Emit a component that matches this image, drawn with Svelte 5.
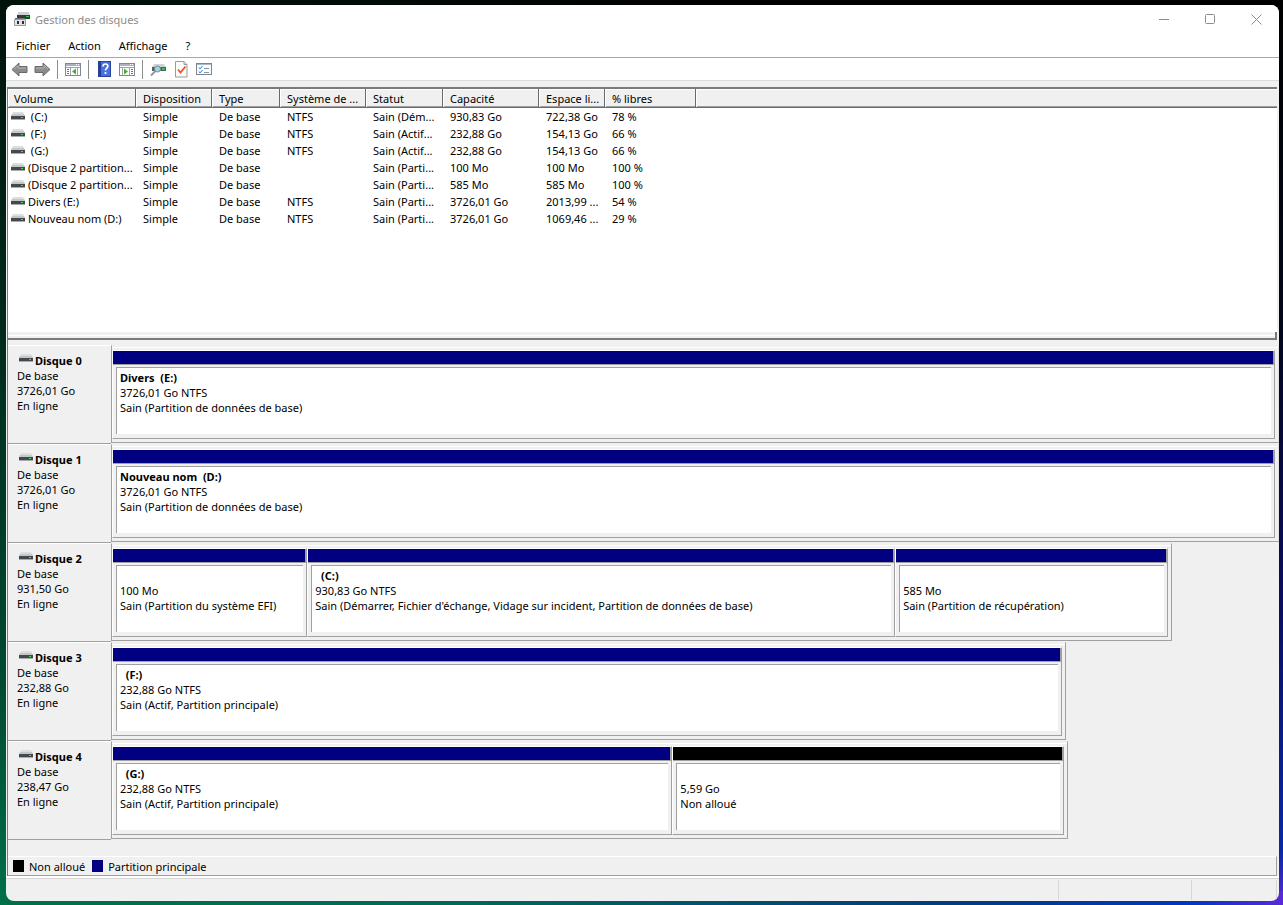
<script>
  const columns = [
    { key: 'volume', label: 'Volume', width: 128 },
    { key: 'layout', label: 'Disposition', width: 76 },
    { key: 'type', label: 'Type', width: 68 },
    { key: 'fs', label: 'Système de ...', width: 86 },
    { key: 'status', label: 'Statut', width: 77 },
    { key: 'capacity', label: 'Capacité', width: 96 },
    { key: 'free', label: 'Espace li...', width: 66 },
    { key: 'percent', label: '% libres', width: 91 }
  ];

  const volumes = [
    { volume: ' (C:)', fs: 'NTFS', status: 'Sain (Dém...', capacity: '930,83 Go', free: '722,38 Go', percent: '78 %' },
    { volume: ' (F:)', fs: 'NTFS', status: 'Sain (Actif...', capacity: '232,88 Go', free: '154,13 Go', percent: '66 %' },
    { volume: ' (G:)', fs: 'NTFS', status: 'Sain (Actif...', capacity: '232,88 Go', free: '154,13 Go', percent: '66 %' },
    { volume: '(Disque 2 partition...', fs: '', status: 'Sain (Parti...', capacity: '100 Mo', free: '100 Mo', percent: '100 %' },
    { volume: '(Disque 2 partition...', fs: '', status: 'Sain (Parti...', capacity: '585 Mo', free: '585 Mo', percent: '100 %' },
    { volume: 'Divers (E:)', fs: 'NTFS', status: 'Sain (Parti...', capacity: '3726,01 Go', free: '2013,99 ...', percent: '54 %' },
    { volume: 'Nouveau nom (D:)', fs: 'NTFS', status: 'Sain (Parti...', capacity: '3726,01 Go', free: '1069,46 ...', percent: '29 %' }
  ].map((v) => ({ layout: 'Simple', type: 'De base', ...v }));

  // scale = share of the available width, share = relative size of a partition
  const disks = [
    {
      name: 'Disque 0', size: '3726,01 Go', scale: 100,
      parts: [{ name: 'Divers  (E:)', size: '3726,01 Go NTFS', status: 'Sain (Partition de données de base)', share: 1 }]
    },
    {
      name: 'Disque 1', size: '3726,01 Go', scale: 100,
      parts: [{ name: 'Nouveau nom  (D:)', size: '3726,01 Go NTFS', status: 'Sain (Partition de données de base)', share: 1 }]
    },
    {
      name: 'Disque 2', size: '931,50 Go', scale: 90.8,
      parts: [
        { name: '', size: '100 Mo', status: 'Sain (Partition du système EFI)', share: 193 },
        { name: '  (C:)', size: '930,83 Go NTFS', status: "Sain (Démarrer, Fichier d'échange, Vidage sur incident, Partition de données de base)", share: 585 },
        { name: '', size: '585 Mo', status: 'Sain (Partition de récupération)', share: 270 }
      ]
    },
    {
      name: 'Disque 3', size: '232,88 Go', scale: 81.8,
      parts: [{ name: '  (F:)', size: '232,88 Go NTFS', status: 'Sain (Actif, Partition principale)', share: 1 }]
    },
    {
      name: 'Disque 4', size: '238,47 Go', scale: 81.9,
      parts: [
        { name: '  (G:)', size: '232,88 Go NTFS', status: 'Sain (Actif, Partition principale)', share: 558 },
        { name: '', size: '5,59 Go', status: 'Non alloué', share: 389, free: true }
      ]
    }
  ];

  const menus = ['Fichier', 'Action', 'Affichage', '?'];
</script>

{#snippet driveIcon()}
  <svg class="drive" width="14" height="9" viewBox="0 0 14 9" aria-hidden="true">
    <path d="M2 0h10l2 4H0z" fill="#dcdee0" />
    <path d="M1 2h12l1 2H0z" fill="#c4c7ca" />
    <path d="M0 4h14v3H0z" fill="#45494c" />
    <path d="M0 7h14v1H0z" fill="#a9acae" />
    <path d="M10 5h2v1h-2z" fill="#35e03a" />
  </svg>
{/snippet}

<div class="desktop">
  <div class="window">
    <header class="titlebar">
      <svg width="16" height="16" viewBox="0 0 16 16" aria-hidden="true">
        <path d="M4 1h11l1 4H3z" fill="#cfd1d3" />
        <path d="M3 4h13v4H3z" fill="#35393b" />
        <path d="M12 5h3v1h-3z" fill="#2fcf3a" />
        <path d="M1 7h10v2H1z" fill="#6e7275" />
        <path d="M.5 8.500h11v6H.5z" fill="#e2e3e4" stroke="#999" />
        <path d="M3 10h2v3H3zM8 10h2v3H8z" fill="#2c2c2c" />
      </svg>
      <h1>Gestion des disques</h1>
      <div class="controls">
        <button aria-label="Réduire">
          <svg width="11" height="11" viewBox="0 0 11 11"><path d="M0 5.5h10" /></svg>
        </button>
        <button aria-label="Agrandir">
          <svg width="11" height="11" viewBox="0 0 11 11"><rect x=".5" y=".5" width="9" height="9" rx="1" /></svg>
        </button>
        <button aria-label="Fermer">
          <svg width="11" height="11" viewBox="0 0 11 11"><path d="M.5 .5l10 10M10.5 .5l-10 10" /></svg>
        </button>
      </div>
    </header>

    <nav class="menubar">
      {#each menus as menu}
        <button>{menu}</button>
      {/each}
    </nav>

    <div class="toolbar">
      <button aria-label="Précédent">
        <svg width="17" height="15" viewBox="0 0 17 15">
          <path d="M1 7.5L8 1v3.5h8v6H8V14z" fill="#8c8c8c" stroke="#6a6a6a" />
          <path d="M3 7L7 3.5V6h8" fill="none" stroke="#b5b5b5" />
        </svg>
      </button>
      <button aria-label="Suivant">
        <svg width="17" height="15" viewBox="0 0 17 15">
          <path d="M16 7.5L9 1v3.5H1v6h8V14z" fill="#8c8c8c" stroke="#6a6a6a" />
          <path d="M14 7l-4-3.500V6H2" fill="none" stroke="#b5b5b5" />
        </svg>
      </button>
      <span class="sep"></span>
      <button aria-label="Afficher l'arborescence">
        <svg width="17" height="15" viewBox="0 0 17 15">
          <rect x=".5" y="1.500" width="15" height="12" fill="#fff" stroke="#7f8a96" />
          <path d="M1 2h14v2H1z" fill="#a9b4c0" />
          <path d="M11 2h1v1h-1zM13 2h1v1h-1z" fill="#fff" />
          <path d="M1 5.500h14M5.500 5v8M12.500 6v7" stroke="#9aa5b0" fill="none" />
          <path d="M2 7.500h2M2 9.500h2M2 11.500h2" stroke="#4878b0" />
          <path d="M11 6.500v6l-4-3z" fill="#3fae2a" />
        </svg>
      </button>
      <span class="sep"></span>
      <button aria-label="Aide">
        <svg width="15" height="17" viewBox="0 0 15 17">
          <rect x="1.500" y=".5" width="12" height="15" fill="#4a70dc" stroke="#2b429c" />
          <path d="M2 1h2v14H2z" fill="#233d9c" />
          <path d="M6 5.500C6 3.600 7 3 8.300 3c1.500 0 2.500.8 2.500 2.200 0 2-2.300 2.100-2.300 4.300M8.500 11v2" fill="none" stroke="#fff" stroke-width="1.700" />
        </svg>
      </button>
      <button aria-label="Afficher le volet Actions">
        <svg width="17" height="15" viewBox="0 0 17 15">
          <rect x=".5" y="1.500" width="15" height="12" fill="#fff" stroke="#7f8a96" />
          <path d="M1 2h14v2H1z" fill="#a9b4c0" />
          <path d="M11 2h1v1h-1zM13 2h1v1h-1z" fill="#fff" />
          <path d="M1 5.500h14M10.500 5v8M3.500 6v7" stroke="#9aa5b0" fill="none" />
          <path d="M12 7.500h2M12 9.500h2M12 11.500h2" stroke="#4878b0" />
          <path d="M5 6.500v6l4-3z" fill="#3fae2a" />
        </svg>
      </button>
      <span class="sep"></span>
      <button aria-label="Actualiser">
        <svg width="17" height="15" viewBox="0 0 17 15">
          <path d="M4 2h10l2 3H2z" fill="#d0d4d6" />
          <path d="M2 5h14v4H2z" fill="#565d60" />
          <path d="M12 6h3v2h-3z" fill="#25c93d" />
          <path d="M5.500 9L1 13.500" stroke="#8b9aa2" stroke-width="2" />
          <circle cx="7.500" cy="7" r="3" fill="#a9d0e4" stroke="#6f8d9c" />
        </svg>
      </button>
      <button aria-label="Propriétés">
        <svg width="15" height="17" viewBox="0 0 15 17">
          <path d="M1.500 .5h8.500l3 3v12.500H1.500z" fill="#fcfcfc" stroke="#9a9a9a" />
          <path d="M10 .5v3h3" fill="#ddd" stroke="#9a9a9a" />
          <path d="M4 8.500l2.500 3 5-6" fill="none" stroke="#f0561d" stroke-width="1.800" />
        </svg>
      </button>
      <button aria-label="Paramètres">
        <svg width="17" height="15" viewBox="0 0 17 15">
          <rect x=".5" y="1.500" width="15" height="11" fill="#fbfcfd" stroke="#7d868e" />
          <path d="M1 2h14v1H1z" fill="#aeb8c0" />
          <path d="M3 5.500l1 1.500 2.500-3M3 9.500l1 1.500 2.500-3" fill="none" stroke="#2f86d0" />
          <path d="M8 6.500h5M8 10.500h5" stroke="#8a949c" />
        </svg>
      </button>
    </div>

    <main>
      <section class="volumes">
        <table>
          <colgroup>
            {#each columns as col}
              <col style="width: {col.width}px" />
            {/each}
            <col />
          </colgroup>
          <thead>
            <tr>
              {#each columns as col}
                <th scope="col">{col.label}</th>
              {/each}
              <td></td>
            </tr>
          </thead>
          <tbody>
            {#each volumes as volume}
              <tr>
                {#each columns as col}
                  {#if col.key === 'volume'}
                    <td class="name"><div>{@render driveIcon()}<span>{volume.volume}</span></div></td>
                  {:else}
                    <td>{volume[col.key]}</td>
                  {/if}
                {/each}
                <td></td>
              </tr>
            {/each}
          </tbody>
        </table>
      </section>

      <div class="splitter"></div>

      <section class="disks">
        {#each disks as disk}
          <div class="disk">
            <div class="label">
              <h2>{@render driveIcon()}{disk.name}</h2>
              <p>De base</p>
              <p>{disk.size}</p>
              <p>En ligne</p>
            </div>
            <div class="track">
              <div class="graph" class:full={disk.scale === 100} style="width: {disk.scale}%">
                {#each disk.parts as part}
                  <div class="part" style="flex-grow: {part.share}">
                    <div class="bar" class:free={part.free}></div>
                    <div class="info">
                      <h3>{part.name}</h3>
                      <p>{part.size}</p>
                      <p>{part.status}</p>
                    </div>
                  </div>
                {/each}
              </div>
            </div>
          </div>
        {/each}
      </section>

      <div class="legend">
        <span class="swatch free"></span>Non alloué
        <span class="swatch"></span>Partition principale
      </div>
    </main>

    <footer class="statusbar">
      <span></span>
      <span></span>
      <span></span>
    </footer>
  </div>
</div>

<style>
  :global(body) {
    margin: 0;
  }

  .desktop {
    box-sizing: border-box;
    display: flex;
    min-height: 100vh;
    padding: 5px 4px 4px 6px;
    font-family: 'Noto Sans', sans-serif;
    font-size: 11px;
    line-height: 15px;
    color: #000;
    background:
      linear-gradient(to right, #00140c, #000 60%, #000) top / 100% 6px no-repeat,
      linear-gradient(to right, #007048, #006a58 35%, #003c80 75%, #0038c0 93%, #5a28d8) bottom / 100% 14px no-repeat,
      linear-gradient(to bottom, #00140c, #002a1c 35%, #004a30 75%, #007048) left / 50% 100% no-repeat,
      linear-gradient(to bottom, #000, #020618 35%, #0a0c5c 65%, #0828a8 94%, #5a28d8) right / 50% 100% no-repeat;
  }

  .window {
    display: flex;
    flex: 1;
    flex-direction: column;
    min-width: 0;
    overflow: hidden;
    border-radius: 8px;
    background: #f0f0f0;
  }

  h1,
  h2,
  h3,
  p {
    margin: 0;
    font-size: inherit;
    white-space: pre;
  }

  button {
    padding: 0;
    border: none;
    background: none;
    font: inherit;
    color: inherit;
  }

  .titlebar {
    display: flex;
    align-items: center;
    height: 28px;
    padding-left: 8px;
    background: #fff;
  }

  h1 {
    flex: 1;
    margin-left: 5px;
    font-weight: 400;
    color: #8c8c8c;
  }

  .controls {
    display: flex;
  }

  .controls button {
    width: 46px;
    height: 28px;
  }

  .controls svg {
    display: block;
    margin: auto;
    fill: none;
    stroke: #8c8c8c;
  }

  .menubar {
    display: flex;
    height: 24px;
    padding-left: 1px;
    border-bottom: 1px solid #a8a8a8;
    background: #fff;
  }

  .menubar button {
    padding: 0 9px;
  }

  .toolbar {
    display: flex;
    align-items: center;
    height: 21px;
    padding: 1px 4px 0 5px;
    border-bottom: 1px solid #dcdcdc;
    background: #fff;
  }

  .toolbar button {
    display: flex;
    justify-content: center;
    width: 23px;
  }

  .toolbar button:first-child {
    justify-content: flex-start;
    width: 20px;
  }

  .sep {
    width: 1px;
    height: 19px;
    margin: 0 4px 0 3px;
    background: #8c8c8c;
  }

  main {
    display: flex;
    flex: 1;
    flex-direction: column;
    margin: 6px 2px 0 1px;
    border-top: 2px solid #7a7a7a;
    border-left: 1px solid #7a7a7a;
  }

  .volumes {
    flex: 1;
    min-height: 243px;
    background: #fff;
  }

  table {
    width: 100%;
    table-layout: fixed;
    border-spacing: 0;
  }

  th,
  td {
    box-sizing: border-box;
    height: 17px;
    padding: 0 0 0 7px;
    text-align: left;
    font-weight: 400;
    line-height: 17px;
    white-space: pre;
    overflow: hidden;
  }

  thead th,
  thead td {
    height: 19px;
    border-bottom: 1px solid #696969;
    background: #f0f0f0;
    box-shadow: inset 1px 1px #fff, inset 0 -1px #a0a0a0;
  }

  thead th {
    border-right: 1px solid #696969;
  }

  thead th:first-child {
    padding-left: 6px;
  }

  .name {
    padding-left: 3px;
  }

  .name div {
    display: flex;
    align-items: center;
    gap: 3px;
  }

  .drive {
    flex: none;
  }

  .splitter {
    height: 6px;
    border-bottom: 2px solid #7a7a7a;
    border-right: 2px solid #7a7a7a;
    background: linear-gradient(#f0f0f0 3px, #fff 3px, #fff 4px, #f0f0f0 4px);
  }

  .disks {
    margin: 5px -2px 16px 0;
  }

  .disk {
    display: flex;
  }

  .label {
    box-sizing: border-box;
    flex: none;
    width: 103px;
    padding: 7px 0 0 9px;
    border-top: 1px solid #fff;
    border-bottom: 1px solid #a0a0a0;
  }

  .label h2 {
    display: flex;
    gap: 2px;
    padding-left: 2px;
    font-weight: 700;
  }

  .label .drive {
    margin-top: 1px;
  }

  .track {
    flex: 1;
    min-width: 0;
    margin-bottom: 1px;
  }

  .graph {
    box-sizing: border-box;
    display: flex;
    padding: 4px 3px 3px 0;
    border: 1px solid #a0a0a0;
    border-top: 1px solid #f0f0f0;
    background: linear-gradient(#f0f0f0 1px, #fff 1px, #fff 2px, #f0f0f0 2px);
  }

  .graph.full {
    border-right-color: #e0e0e0;
  }

  .part {
    flex: 1 1 0;
    min-width: 0;
    border: 1px solid #a0a0a0;
    border-top-color: #fff;
    border-left-color: #fff;
  }

  .bar {
    height: 13px;
    border-right: 1px solid #a0a0a0;
    border-bottom: 1px solid #a0a0a0;
    background: #000080;
  }

  .free {
    background: #000;
  }

  .info {
    margin: 2px 3px 4px;
    padding: 2px 3px 19px;
    border-top: 1px solid #a0a0a0;
    border-left: 1px solid #a0a0a0;
    background: #fff;
    overflow: hidden;
  }

  .info h3 {
    height: 15px;
  }

  .legend {
    display: flex;
    align-items: center;
    height: 18px;
    padding-left: 5px;
    border-top: 1px solid #fff;
    border-right: 1px solid #a0a0a0;
    border-bottom: 1px solid #a0a0a0;
  }

  .swatch {
    width: 11px;
    height: 12px;
    margin: 0 5px 0 7px;
    background: #000080;
  }

  .swatch:first-child {
    margin-left: 0;
  }

  .swatch.free {
    background: #000;
  }

  .statusbar {
    display: flex;
    height: 22px;
    padding-right: 2px;
    border-top: 1px solid #d7d7d7;
    margin-top: 2px;
    box-shadow: 0 -2px #fff;
  }

  .statusbar span {
    width: 84px;
    margin: 1px 0;
    border-right: 1px solid #d7d7d7;
  }

  .statusbar span:first-child {
    flex: 1;
  }

  .statusbar span:nth-child(2) {
    width: 132px;
  }
</style>
